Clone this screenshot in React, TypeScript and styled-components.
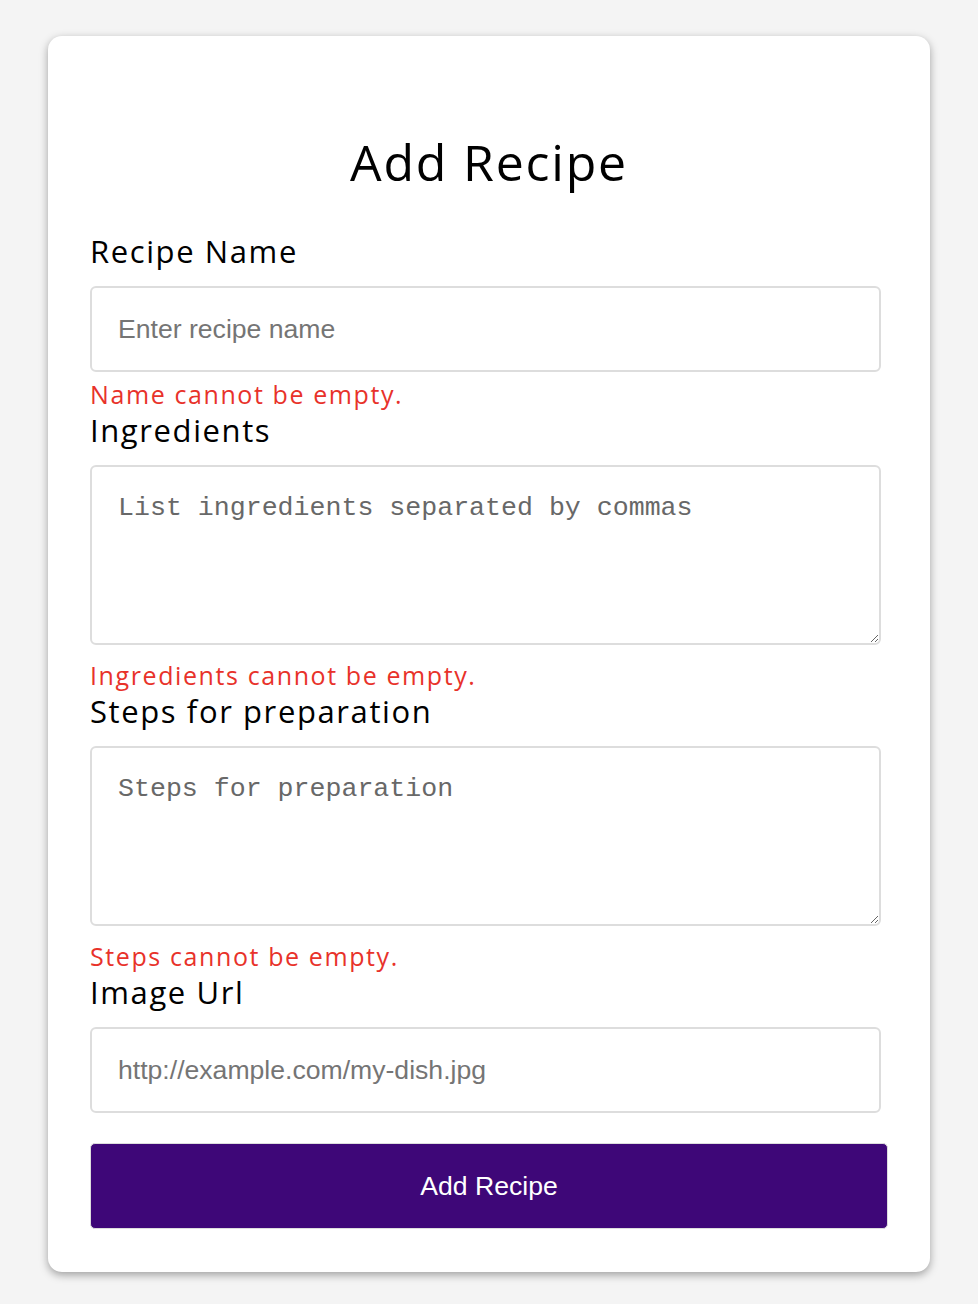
import styled, { createGlobalStyle } from 'styled-components';

const GlobalStyle = createGlobalStyle`
  html, body {
    margin: 0;
    padding: 0;
    background-color: #f4f4f4;
  }
  body {
    padding-bottom: 32px;
  }
  * {
    box-sizing: border-box;
  }
`;

interface FieldPropsTypes {
  label: string;
  error: string;
  placeholder: string;
  multiline?: boolean;
}

function Field(props: FieldPropsTypes) {
  const { label, error, placeholder, multiline } = props;

  return (
    <>
      <Label>{label}</Label>
      {multiline ? <TextArea placeholder={placeholder} /> : <Input type="text" placeholder={placeholder} />}
      {error && <ErrorText>{error}</ErrorText>}
    </>
  );
}

export default function App() {
  function handleSubmit(event: React.FormEvent<HTMLFormElement>) {
    event.preventDefault();
  }

  return (
    <>
      <GlobalStyle />
      <Card>
        <Title>Add Recipe</Title>
        <Form onSubmit={handleSubmit}>
          <Field label="Recipe Name" placeholder="Enter recipe name" error="Name cannot be empty." />
          <Field
            label="Ingredients"
            placeholder="List ingredients separated by commas"
            error="Ingredients cannot be empty."
            multiline
          />
          <Field
            label="Steps for preparation"
            placeholder="Steps for preparation"
            error="Steps cannot be empty."
            multiline
          />
          <Field label="Image Url" placeholder="http://example.com/my-dish.jpg" error="" />
          <SubmitButton type="submit">Add Recipe</SubmitButton>
        </Form>
      </Card>
    </>
  );
}

const Card = styled.main`
  margin: 36px auto 0;
  border-radius: 14px;
  box-shadow: 0 3px 8px rgba(0, 0, 0, 0.35);
  background-color: #ffffff;
  padding: 96px 42px 43px;
  width: 882px;
`;

const Title = styled.h1`
  margin: 0 0 38px;
  color: #000000;
  font-family: 'Open Sans', sans-serif;
  font-size: 50px;
  font-weight: 400;
  letter-spacing: 1.8px;
  line-height: 60px;
  text-align: center;
`;

const Form = styled.form`
  display: flex;
  flex-direction: column;
  width: 100%;
`;

const Label = styled.label`
  display: block;
  margin: 3px 0 17px;
  color: #000000;
  font-family: 'Open Sans', sans-serif;
  font-size: 31px;
  letter-spacing: 1.6px;
  line-height: 36px;
`;

const controlStyle = `
  display: block;
  border: 2px solid #dddddd;
  border-radius: 6px;
  background-color: #ffffff;
  padding: 0 26px;
  width: 791px;
  color: #000000;
  font-size: 26.6px;
  &::placeholder {
    color: #757575;
  }
`;

const Input = styled.input`
  ${controlStyle}
  height: 86px;
  font-family: 'Liberation Sans', Arial, sans-serif;
`;

const TextArea = styled.textarea`
  ${controlStyle}
  margin-bottom: 8px;
  padding-top: 26px;
  height: 180px;
  font-family: 'Liberation Mono', 'Courier New', monospace;
  &::placeholder {
    color: #686868;
  }
`;

const ErrorText = styled.p`
  margin: 7px 0 0;
  color: #e8322a;
  font-family: 'Open Sans', sans-serif;
  font-size: 25px;
  letter-spacing: 1.6px;
  line-height: 30px;
`;

const SubmitButton = styled.button`
  display: flex;
  align-items: center;
  justify-content: center;
  margin-top: 30px;
  border: 1px solid #dddddd;
  border-radius: 5px;
  background-color: #3e0778;
  width: 100%;
  height: 86px;
  color: #ffffff;
  font-family: 'Liberation Sans', Arial, sans-serif;
  font-size: 26.6px;
  cursor: pointer;
`;
